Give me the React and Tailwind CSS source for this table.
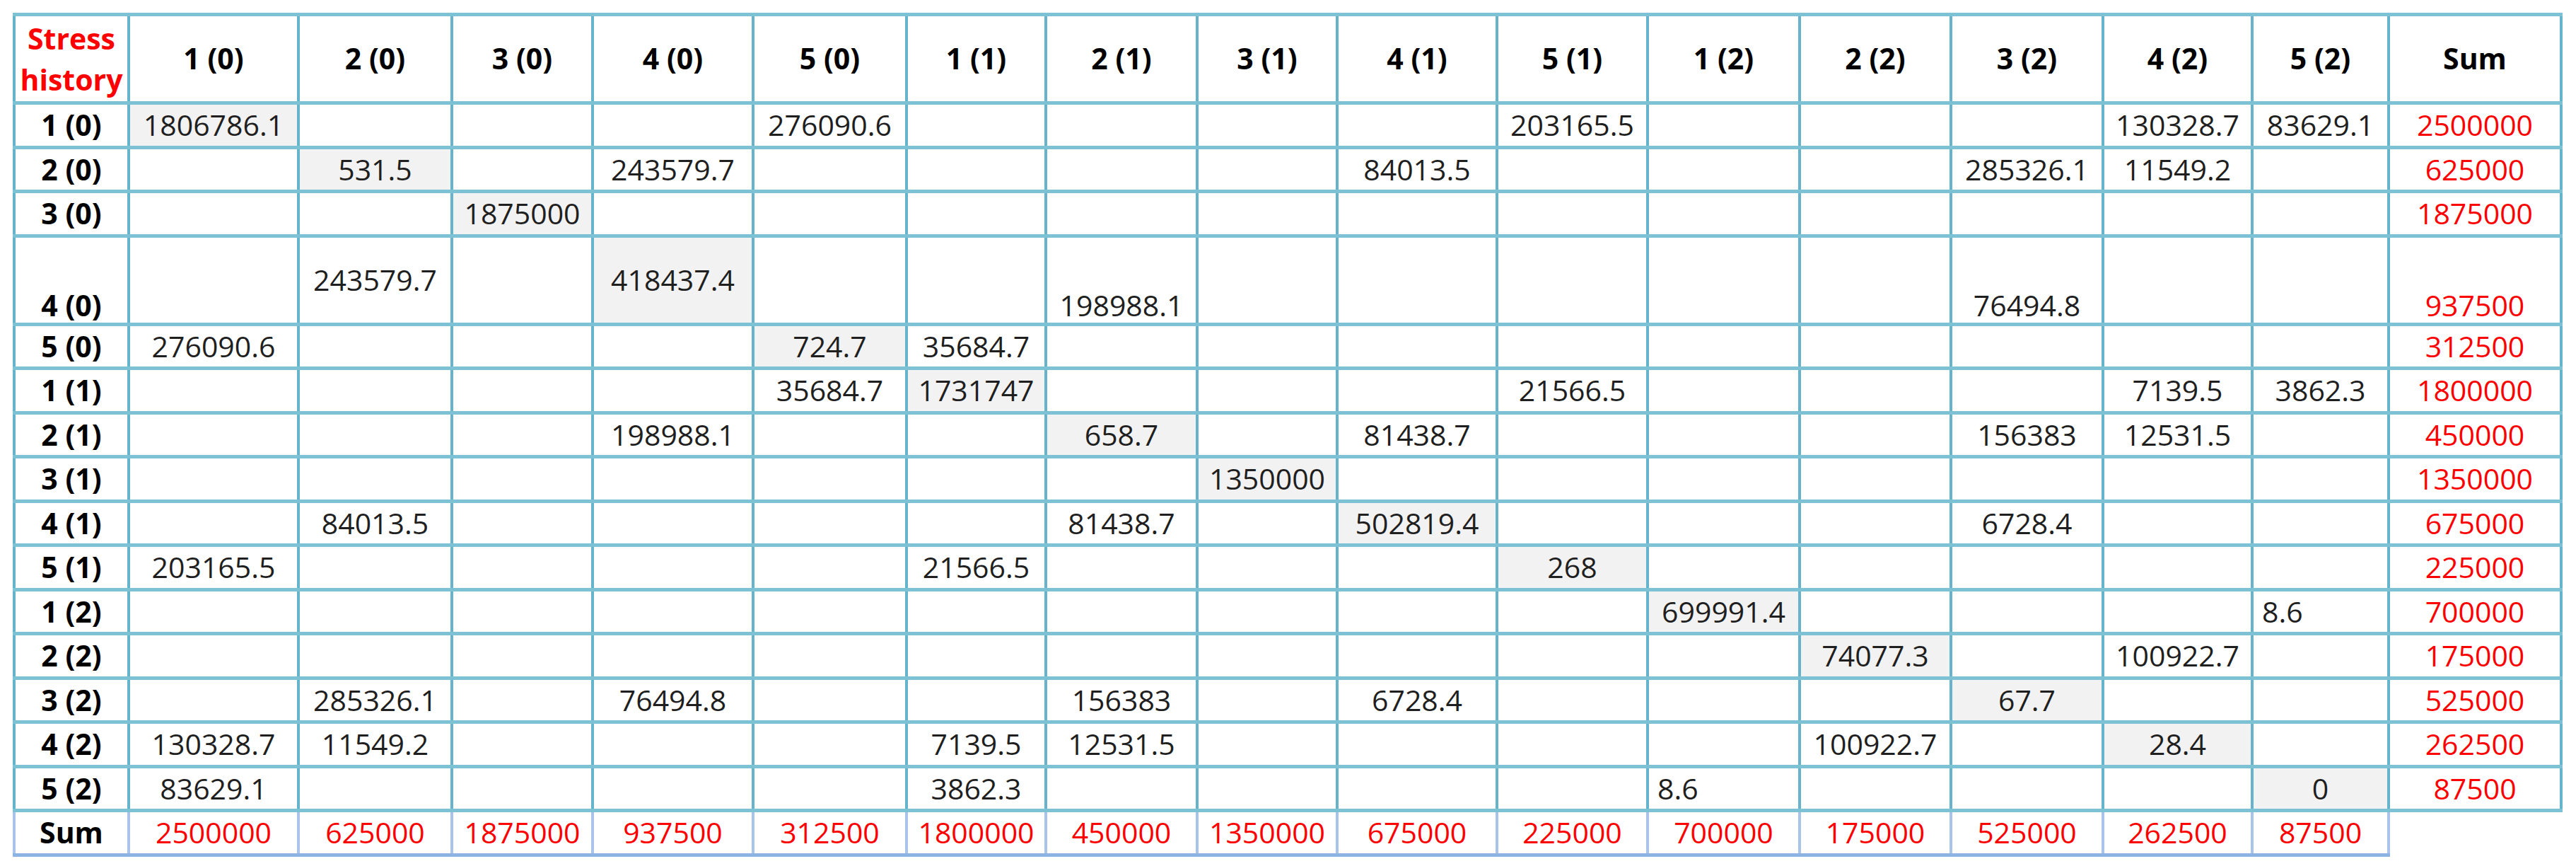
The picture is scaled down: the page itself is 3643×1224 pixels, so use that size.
import React from 'react';

const headers = ['1 (0)', '2 (0)', '3 (0)', '4 (0)', '5 (0)', '1 (1)', '2 (1)', '3 (1)', '4 (1)', '5 (1)', '1 (2)', '2 (2)', '3 (2)', '4 (2)', '5 (2)'];

// widths between grid-line centres, measured off the reference
const colWidths = ['w-[162px]', 'w-[240px]', 'w-[217px]', 'w-[199px]', 'w-[227px]', 'w-[217px]', 'w-[197px]', 'w-[214px]', 'w-[198px]', 'w-[226px]', 'w-[213px]', 'w-[215px]', 'w-[214px]', 'w-[215px]', 'w-[211px]', 'w-[193px]', 'w-[244px]'];

const rows = [
  { label: '1 (0)', sum: '2500000', cells: { 1: '1806786.1', 5: '276090.6', 10: '203165.5', 14: '130328.7', 15: '83629.1' } },
  { label: '2 (0)', sum: '625000', cells: { 2: '531.5', 4: '243579.7', 9: '84013.5', 13: '285326.1', 14: '11549.2' } },
  { label: '3 (0)', sum: '1875000', cells: { 3: '1875000' } },
  { label: '4 (0)', sum: '937500', tall: true, bottom: [7, 13], cells: { 2: '243579.7', 4: '418437.4', 7: '198988.1', 13: '76494.8' } },
  { label: '5 (0)', sum: '312500', cells: { 1: '276090.6', 5: '724.7', 6: '35684.7' } },
  { label: '1 (1)', sum: '1800000', cells: { 5: '35684.7', 6: '1731747', 10: '21566.5', 14: '7139.5', 15: '3862.3' } },
  { label: '2 (1)', sum: '450000', cells: { 4: '198988.1', 7: '658.7', 9: '81438.7', 13: '156383', 14: '12531.5' } },
  { label: '3 (1)', sum: '1350000', cells: { 8: '1350000' } },
  { label: '4 (1)', sum: '675000', cells: { 2: '84013.5', 7: '81438.7', 9: '502819.4', 13: '6728.4' } },
  { label: '5 (1)', sum: '225000', cells: { 1: '203165.5', 6: '21566.5', 10: '268' } },
  { label: '1 (2)', sum: '700000', left: [15], cells: { 11: '699991.4', 15: '8.6' } },
  { label: '2 (2)', sum: '175000', cells: { 12: '74077.3', 14: '100922.7' } },
  { label: '3 (2)', sum: '525000', cells: { 2: '285326.1', 4: '76494.8', 7: '156383', 9: '6728.4', 13: '67.7' } },
  { label: '4 (2)', sum: '262500', cells: { 1: '130328.7', 2: '11549.2', 6: '7139.5', 7: '12531.5', 12: '100922.7', 14: '28.4' } },
  { label: '5 (2)', sum: '87500', left: [11], cells: { 1: '83629.1', 6: '3862.3', 11: '8.6', 15: '0' } },
];

const colSums = ['2500000', '625000', '1875000', '937500', '312500', '1800000', '450000', '1350000', '675000', '225000', '700000', '175000', '525000', '262500', '87500'];

const cellBase = 'border-x-[4px] border-y-[5px] border-x-[#66b4cb] border-y-[#7dc1d5] p-0';

export default function App() {
  return (
    <div className="w-[3643px] h-[1224px] bg-white pl-[18px] pt-[18px]" style={{ fontFamily: '"Open Sans", "Noto Sans", sans-serif' }}>
      <table className="table-fixed border-collapse w-[3602px] text-[41px] leading-[1.15] text-[#1f1f1f]">
        <colgroup>
          {colWidths.map((w, i) => (
            <col key={i} className={w} />
          ))}
        </colgroup>
        <thead>
          <tr className="h-[125px]">
            <th className={`${cellBase} text-[#ff0000] font-bold leading-[58px] align-middle`}>
              Stress history
            </th>
            {headers.map((h) => (
              <th key={h} className={`${cellBase} font-bold text-black align-middle`}>
                {h}
              </th>
            ))}
            <th className={`${cellBase} font-bold text-black align-middle`}>Sum</th>
          </tr>
        </thead>
        <tbody>
          {rows.map((row, ri) => {
            const bottom = row.bottom || [];
            const left = row.left || [];
            return (
              <tr key={row.label} className={row.tall ? 'h-[125px]' : 'h-[62.5px]'}>
                <td className={`${cellBase} font-bold text-black text-center ${row.tall ? 'align-bottom' : 'align-middle'}`}>
                  {row.label}
                </td>
                {headers.map((_, ci) => {
                  const c = ci + 1;
                  const diag = c === ri + 1;
                  const val = row.cells[c];
                  return (
                    <td
                      key={c}
                      className={`${cellBase} ${diag ? 'bg-[#f2f2f2]' : 'bg-white'} ${bottom.includes(c) ? 'align-bottom' : 'align-middle'} ${left.includes(c) ? 'text-left pl-[12px]' : 'text-center'}`}
                    >
                      {val}
                    </td>
                  );
                })}
                <td className={`${cellBase} text-[#ff0000] text-center ${row.tall ? 'align-bottom' : 'align-middle'}`}>
                  {row.sum}
                </td>
              </tr>
            );
          })}
          <tr className="h-[62.5px]">
            <td className="border-x-[4px] border-y-[5px] border-x-[#a9c4ea] border-y-[#8db3e2] p-0 font-bold text-black text-center align-middle">
              Sum
            </td>
            {colSums.map((s, i) => (
              <td key={i} className="border-x-[4px] border-y-[5px] border-x-[#a9c4ea] border-y-[#8db3e2] p-0 text-[#ff0000] text-center align-middle">
                {s}
              </td>
            ))}
            <td className="p-0 border-none" />
          </tr>
        </tbody>
      </table>
    </div>
  );
}
